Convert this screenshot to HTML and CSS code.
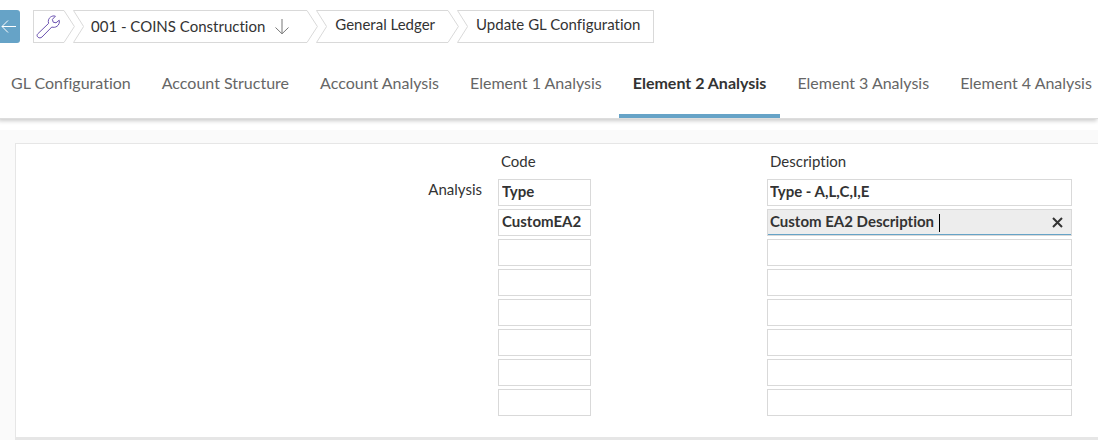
FILE: index.html
```html
<!DOCTYPE html>
<html lang="en">
<head>
<meta charset="utf-8">
<meta name="viewport" content="width=device-width, initial-scale=1">
<title>Update GL Configuration</title>
<link rel="stylesheet" href="styles.css">
</head>
<body>
<header class="topbar">
  <button class="back" type="button" aria-label="Back">
    <svg width="18" height="18" viewBox="0 0 18 18"><path d="M2 8.5H16M8 2.5L2 8.5L8 14.5"/></svg>
  </button>
  <nav class="crumbs" aria-label="Breadcrumb">
    <a class="crumb crumb-tool" href="#" aria-label="Tools">
      <span class="body">
        <svg class="wrench" width="26" height="26" viewBox="0 0 26 26"><path d="M1.8 19.8L12.6 9.4C11.8 6.8 12.6 4.4 14.6 3C16 2 17.6 1.6 19.4 2.2L16.4 5.4L17.2 8.2L20 8.8L23.2 6.2C23.8 8.6 22.8 11 21 12.3C19.4 13.4 17.4 13.6 15.8 13L6 23C4.9 24.1 3 24.2 1.9 23.1C0.8 22 0.8 20.8 1.8 19.8Z"/></svg>
      </span>
      <svg class="edge" width="11" height="33" viewBox="0 0 11 33"><path d="M0 .5L10.4 16.5L0 32.5"/></svg>
    </a>
    <a class="crumb" href="#">
      <svg class="edge" width="11" height="33" viewBox="0 0 11 33"><path d="M11 .5H.5L10.6 16.5L.5 32.5H11"/></svg>
      <span class="body company">001 - COINS Construction
        <svg class="down" width="16" height="17" viewBox="0 0 16 17"><path d="M8 1V15.5M1.5 9.5L8 15.8L14.5 9.5"/></svg>
      </span>
      <svg class="edge" width="11" height="33" viewBox="0 0 11 33"><path d="M0 .5L10.4 16.5L0 32.5"/></svg>
    </a>
    <a class="crumb" href="#">
      <svg class="edge" width="11" height="33" viewBox="0 0 11 33"><path d="M11 .5H.5L10.6 16.5L.5 32.5H11"/></svg>
      <span class="body">General Ledger</span>
      <svg class="edge" width="11" height="33" viewBox="0 0 11 33"><path d="M0 .5L10.4 16.5L0 32.5"/></svg>
    </a>
    <a class="crumb" href="#" aria-current="page">
      <svg class="edge" width="11" height="33" viewBox="0 0 11 33"><path d="M11 .5H.5L10.6 16.5L.5 32.5H11"/></svg>
      <span class="body last">Update GL Configuration</span>
    </a>
  </nav>
</header>
<nav class="tabs" aria-label="Sections">
  <a class="tab" href="#">GL Configuration</a>
  <a class="tab" href="#">Account Structure</a>
  <a class="tab" href="#">Account Analysis</a>
  <a class="tab" href="#">Element 1 Analysis</a>
  <a class="tab active" href="#" aria-current="true">Element 2 Analysis</a>
  <a class="tab" href="#">Element 3 Analysis</a>
  <a class="tab" href="#">Element 4 Analysis</a>
</nav>
<main class="content">
  <form class="card">
    <table class="grid">
      <colgroup><col class="col-label"><col class="col-code"><col></colgroup>
      <thead>
        <tr><td></td><th id="code" scope="col">Code</th><th id="desc" scope="col">Description</th></tr>
      </thead>
      <tbody>
        <tr><th id="analysis" scope="row">Analysis</th><td><input class="field code" aria-labelledby="analysis code" value="Type"></td><td><input class="field" aria-labelledby="analysis desc" value="Type - A,L,C,I,E"></td></tr>
        <tr><td></td><td><input class="field code" aria-labelledby="analysis code" value="CustomEA2"></td><td>
          <div class="editing">
            <input class="field focused" aria-labelledby="analysis desc" value="Custom EA2 Description ">
            <span class="caret"></span>
            <button class="clear" type="button" aria-label="Clear"><svg width="11" height="11" viewBox="0 0 11 11"><path d="M1 1L10 10M10 1L1 10"/></svg></button>
          </div></td></tr>
        <tr><td></td><td><input class="field code" aria-labelledby="analysis code"></td><td><input class="field" aria-labelledby="analysis desc"></td></tr>
        <tr><td></td><td><input class="field code" aria-labelledby="analysis code"></td><td><input class="field" aria-labelledby="analysis desc"></td></tr>
        <tr><td></td><td><input class="field code" aria-labelledby="analysis code"></td><td><input class="field" aria-labelledby="analysis desc"></td></tr>
        <tr><td></td><td><input class="field code" aria-labelledby="analysis code"></td><td><input class="field" aria-labelledby="analysis desc"></td></tr>
        <tr><td></td><td><input class="field code" aria-labelledby="analysis code"></td><td><input class="field" aria-labelledby="analysis desc"></td></tr>
        <tr><td></td><td><input class="field code" aria-labelledby="analysis code"></td><td><input class="field" aria-labelledby="analysis desc"></td></tr>
      </tbody>
    </table>
  </form>
</main>
</body>
</html>
```

FILE: styles.css
```css
* { box-sizing: border-box; }

body {
  margin: 0;
  background: #fff;
  color: #333;
  font-family: Lato, "Liberation Sans", sans-serif;
  font-size: 15px;
  font-variant-ligatures: none;
  line-height: 20px;
  overflow-x: hidden;
}

a { color: inherit; text-decoration: none; }
svg { display: block; flex: none; fill: none; }

.topbar {
  display: flex;
  gap: 13px;
  padding-top: 10px;
}

.back {
  display: flex;
  align-items: center;
  width: 20px;
  height: 33px;
  padding: 0;
  border: 0;
  border-radius: 0 3px 3px 0;
  background: #66a3c7;
}
.back svg { stroke: #fff; stroke-width: 1; }

.crumbs { display: flex; }
.crumb { display: flex; height: 33px; white-space: nowrap; }
.crumb + .crumb { margin-left: -2px; }
.edge { stroke: #d9d9d9; stroke-width: 1; }

.body {
  display: flex;
  padding: 3px 13px 0 8px;
  border: solid #d9d9d9;
  border-width: 1px 0;
}
.company { gap: 9px; padding: 5px 17px 0 7px; }
.last { border-right-width: 1px; }
.crumb-tool .body { padding: 3px 2px 0; border-left-width: 1px; }
.wrench { stroke: #6a51b0; stroke-width: 1; }
.down { margin-top: 2px; stroke: #777; stroke-width: 1; }

.tabs {
  display: flex;
  gap: 3px;
  margin-left: -3px;
  padding-top: 22px;
  border-bottom: 1px solid #ddd;
  box-shadow: 0 3px 4px -1px #ccc;
  color: #666;
  font-size: 16px;
  white-space: nowrap;
}
.tab {
  height: 53px;
  padding: 8px 14px 0;
  border-bottom: 4px solid transparent;
}
.active {
  border-color: #66a3c7;
  color: #333;
  font-weight: 700;
}

.content {
  margin-top: 11px;
  padding: 13px 0 0 15px;
  background: #fafafa;
}
.card {
  padding: 5px 0 18px;
  border: solid #e6e6e6;
  border-width: 1px 0 4px 1px;
  background: #fff;
}

.grid {
  width: 100%;
  table-layout: fixed;
  border-collapse: collapse;
}
.col-label { width: 482px; }
.col-code { width: 269px; }
.grid th, .grid td {
  height: 30px;
  padding: 0;
  font-weight: 400;
  text-align: left;
  vertical-align: top;
}
.grid td:last-child { padding-right: 26px; }
.grid thead th { padding: 2px 0 0 3px; }
.grid tbody th { padding-right: 16px; text-align: right; }

.field {
  display: block;
  width: 100%;
  height: 27px;
  padding: 0 2px 3px;
  border: 1px solid #d9d9d9;
  border-radius: 0;
  background: #fff;
  color: #333;
  font: 700 15px Lato, "Liberation Sans", sans-serif;
  font-variant-ligatures: none;
  outline: 0;
}
.code { width: 93px; padding-left: 3px; }

.editing { position: relative; }
.focused {
  background: #ededed;
  box-shadow: inset 0 -1px #66a3c7;
}
.caret {
  position: absolute;
  top: 5px;
  left: 172px;
  width: 1px;
  height: 18px;
  background: #000;
}
.clear {
  position: absolute;
  top: 8px;
  right: 9px;
  padding: 0;
  border: 0;
  background: none;
}
.clear svg { stroke: #333; stroke-width: 2; }
```
